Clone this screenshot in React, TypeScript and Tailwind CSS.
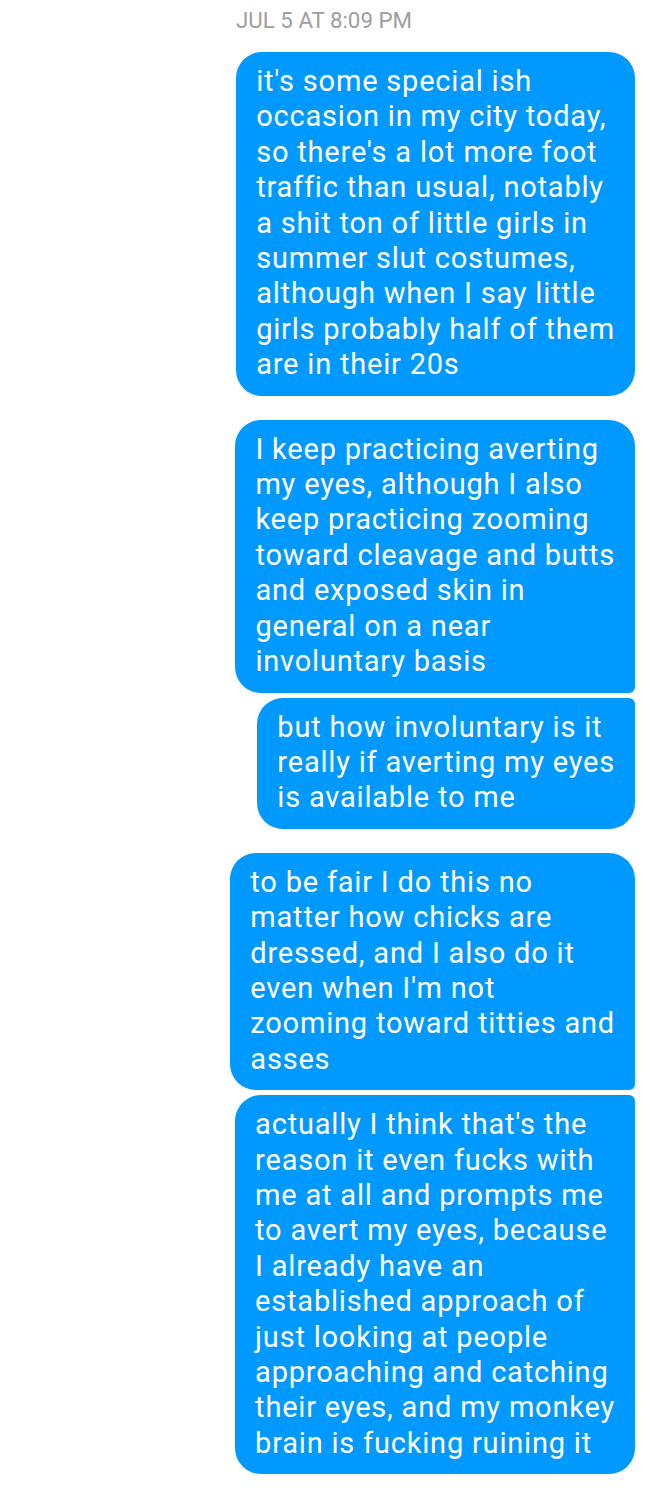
const groups: { lines: string[] }[][] = [
  [
    {
      lines: [
        "it's some special ish",
        "occasion in my city today,",
        "so there's a lot more foot",
        "traffic than usual, notably",
        "a shit ton of little girls in",
        "summer slut costumes,",
        "although when I say little",
        "girls probably half of them",
        "are in their 20s",
      ],
    },
  ],
  [
    {
      lines: [
        "I keep practicing averting",
        "my eyes, although I also",
        "keep practicing zooming",
        "toward cleavage and butts",
        "and exposed skin in",
        "general on a near",
        "involuntary basis",
      ],
    },
    {
      lines: [
        "but how involuntary is it",
        "really if averting my eyes",
        "is available to me",
      ],
    },
  ],
  [
    {
      lines: [
        "to be fair I do this no",
        "matter how chicks are",
        "dressed, and I also do it",
        "even when I'm not",
        "zooming toward titties and",
        "asses",
      ],
    },
    {
      lines: [
        "actually I think that's the",
        "reason it even fucks with",
        "me at all and prompts me",
        "to avert my eyes, because",
        "I already have an",
        "established approach of",
        "just looking at people",
        "approaching and catching",
        "their eyes, and my monkey",
        "brain is fucking ruining it",
      ],
    },
  ],
]

function Bubble({ lines, first, last }: { lines: string[]; first: boolean; last: boolean }) {
  const corners = first && last
    ? "rounded-[26px]"
    : first
    ? "rounded-l-[26px] rounded-tr-[26px] rounded-br-[6px]"
    : last
    ? "rounded-l-[26px] rounded-br-[26px] rounded-tr-[6px]"
    : "rounded-l-[26px] rounded-r-[6px]"
  return (
    <div className={`bg-[#0099ff] text-white px-5 pt-3 pb-[13px] ${corners}`}>
      {lines.map((l, i) => (
        <div key={i} className="whitespace-nowrap text-[29px] leading-[35.4px] tracking-[0.8px]">
          {l}
        </div>
      ))}
    </div>
  )
}

export default function App() {
  return (
    <div className="w-full min-h-screen bg-white font-['Roboto',sans-serif] pb-[14px]">
      <div className="text-center text-[#9e9e9e] text-[22.3px] leading-[26px] pt-[7px]">
        JUL 5 AT 8:09 PM
      </div>
      <div className="flex flex-col items-end gap-[24px] pr-[13px] mt-[19px]">
        {groups.map((g, gi) => (
          <div key={gi} className="flex flex-col items-end gap-[5px]">
            {g.map((b, bi) => (
              <Bubble key={bi} lines={b.lines} first={bi === 0} last={bi === g.length - 1} />
            ))}
          </div>
        ))}
      </div>
    </div>
  )
}
